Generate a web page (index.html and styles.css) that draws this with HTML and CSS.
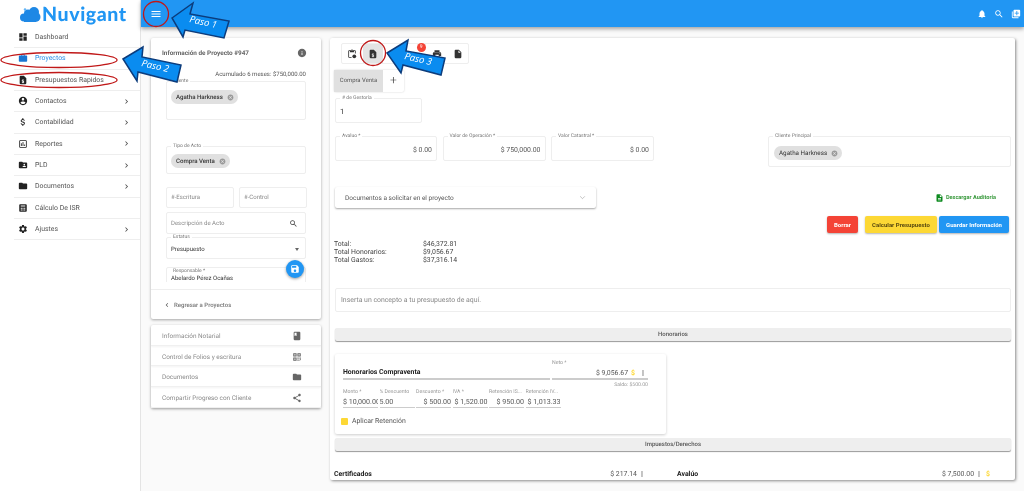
FILE: index.html
```html
<!DOCTYPE html>
<html lang="es">
<head>
    <meta charset="UTF-8">
    <title>Nuvigant</title>
    <link rel="stylesheet" href="styles.css">
</head>
<body>
    <svg class="defs" aria-hidden="true">
        <symbol id="i-dashboard" viewBox="0 0 24 24"><path d="M3 13h8V3H3v10zm0 8h8v-6H3v6zm10 0h8V11h-8v10zm0-18v6h8V3h-8z"/></symbol>
        <symbol id="i-work" viewBox="0 0 24 24"><path d="M20 6h-4V4c0-1.110-.89-2-2-2h-4c-1.110 0-2 .89-2 2v2H4c-1.110 0-1.990.89-1.990 2L2 19c0 1.110.89 2 2 2h16c1.110 0 2-.89 2-2V8c0-1.110-.89-2-2-2zm-6 0h-4V4h4v2z"/></symbol>
        <symbol id="i-budget" viewBox="0 0 24 24"><path fill-rule="evenodd" d="M14 2H6c-1.100 0-2 .9-2 2v16c0 1.100.9 2 2 2h12c1.100 0 2-.9 2-2V8l-6-6zm-1 8h-2v1.200c-1.100.3-2 1.100-2 2.300 0 1.400 1.100 2 2.600 2.400.9.2 1.200.5 1.200.9 0 .3-.3.7-1.100.7-.9 0-1.200-.4-1.200-.9H9c.1 1.300 1 2 2 2.300V20h2v-1.100c1.100-.2 2-1 2-2.200 0-1.700-1.400-2.200-2.700-2.600-1-.2-1.300-.5-1.300-.8 0-.4.4-.7 1-.7.7 0 1 .3 1 .8h1.900c-.1-1.100-.8-1.900-1.900-2.200V10z"/></symbol>
        <symbol id="i-account" viewBox="0 0 24 24"><path d="M12 2C6.480 2 2 6.480 2 12s4.480 10 10 10 10-4.480 10-10S17.520 2 12 2zm0 3c1.660 0 3 1.340 3 3s-1.340 3-3 3-3-1.340-3-3 1.340-3 3-3zm0 14.200c-2.500 0-4.710-1.280-6-3.220.03-1.990 4-3.080 6-3.080 1.990 0 5.970 1.090 6 3.080-1.290 1.940-3.500 3.220-6 3.220z"/></symbol>
        <symbol id="i-money" viewBox="0 0 24 24"><path d="M11.800 10.900c-2.270-.59-3-1.200-3-2.150 0-1.090 1.010-1.850 2.700-1.850 1.780 0 2.440.85 2.500 2.100h2.210c-.07-1.720-1.120-3.300-3.210-3.810V3h-3v2.160c-1.940.42-3.500 1.680-3.500 3.610 0 2.310 1.910 3.460 4.700 4.130 2.500.6 3 1.480 3 2.410 0 .69-.49 1.790-2.700 1.790-2.060 0-2.870-.92-2.980-2.100h-2.200c.12 2.190 1.760 3.420 3.680 3.830V21h3v-2.150c1.950-.37 3.500-1.500 3.500-3.550 0-2.840-2.430-3.810-4.700-4.400z"/></symbol>
        <symbol id="i-report" viewBox="0 0 24 24"><path d="M19 3H5c-1.100 0-2 .9-2 2v14c0 1.100.9 2 2 2h14c1.100 0 2-.9 2-2V5c0-1.100-.9-2-2-2zm0 16H5V5h14v14zM7 10h2v7H7zm4-3h2v10h-2zm4 6h2v4h-2z"/></symbol>
        <symbol id="i-shared" viewBox="0 0 24 24"><path d="M20 6h-8l-2-2H4c-1.100 0-1.990.9-1.990 2L2 18c0 1.100.9 2 2 2h16c1.100 0 2-.9 2-2V8c0-1.100-.9-2-2-2zm-5 3c1.100 0 2 .9 2 2s-.9 2-2 2-2-.9-2-2 .9-2 2-2zm4 8h-8v-1c0-1.330 2.670-2 4-2s4 .67 4 2v1z"/></symbol>
        <symbol id="i-folder" viewBox="0 0 24 24"><path d="M10 4H4c-1.100 0-1.990.9-1.990 2L2 18c0 1.100.9 2 2 2h16c1.100 0 2-.9 2-2V8c0-1.100-.9-2-2-2h-8l-2-2z"/></symbol>
        <symbol id="i-calc" viewBox="0 0 24 24"><path fill-rule="evenodd" d="M5 3h14c1.100 0 2 .9 2 2v14c0 1.100-.9 2-2 2H5c-1.100 0-2-.9-2-2V5c0-1.100.9-2 2-2zm1.500 3v2.500h11V6h-11zm0 5.500v2.500h3v-2.500h-3zm4 0v2.500h3v-2.500h-3zm4 0v2.500h3v-2.500h-3zm-8 4v2.500h3v-2.500h-3zm4 0v2.500h3v-2.500h-3zm4 0v2.500h3v-2.500h-3z"/></symbol>
        <symbol id="i-settings" viewBox="0 0 24 24"><path d="M19.140 12.940c.04-.3.06-.61.06-.94 0-.32-.02-.64-.07-.94l2.030-1.580c.18-.14.23-.41.12-.61l-1.920-3.320c-.12-.22-.37-.29-.59-.22l-2.390.96c-.5-.38-1.030-.7-1.620-.94l-.36-2.540c-.04-.24-.24-.41-.48-.41h-3.840c-.24 0-.43.17-.47.41l-.36 2.540c-.59.24-1.130.57-1.620.94l-2.390-.96c-.22-.08-.47 0-.59.22L2.740 8.870c-.12.21-.08.47.12.61l2.030 1.580c-.05.3-.09.63-.09.94s.02.64.07.94l-2.030 1.580c-.18.14-.23.41-.12.61l1.920 3.320c.12.22.37.29.59.22l2.390-.96c.5.38 1.030.7 1.620.94l.36 2.540c.05.24.24.41.48.41h3.840c.24 0 .44-.17.47-.41l.36-2.540c.59-.24 1.130-.56 1.620-.94l2.390.96c.22.08.47 0 .59-.22l1.920-3.320c.12-.22.07-.47-.12-.61l-2.010-1.580zM12 15.600c-1.980 0-3.600-1.620-3.600-3.600s1.620-3.600 3.600-3.600 3.600 1.620 3.600 3.600-1.620 3.600-3.600 3.600z"/></symbol>
        <symbol id="i-right" viewBox="0 0 24 24"><path d="M10 6L8.590 7.410 13.170 12l-4.580 4.590L10 18l6-6z"/></symbol>
        <symbol id="i-left" viewBox="0 0 24 24"><path d="M15.410 7.410L14 6l-6 6 6 6 1.410-1.410L10.830 12z"/></symbol>
        <symbol id="i-menu" viewBox="0 0 24 24"><path d="M3 18h18v-2H3v2zm0-5h18v-2H3v2zm0-7v2h18V6H3z"/></symbol>
        <symbol id="i-bell" viewBox="0 0 24 24"><path d="M12 22c1.100 0 2-.9 2-2h-4c0 1.100.89 2 2 2zm6-6v-5c0-3.070-1.640-5.640-4.500-6.320V4c0-.83-.67-1.500-1.500-1.500s-1.500.67-1.500 1.500v.68C7.630 5.360 6 7.920 6 11v5l-2 2v1h16v-1l-2-2z"/></symbol>
        <symbol id="i-search" viewBox="0 0 24 24"><path d="M15.500 14h-.79l-.28-.27C15.410 12.590 16 11.110 16 9.500 16 5.910 13.090 3 9.500 3S3 5.910 3 9.500 5.910 16 9.500 16c1.610 0 3.090-.59 4.230-1.570l.27.28v.79l5 4.990L20.490 19l-4.990-5zm-6 0C7.010 14 5 11.990 5 9.500S7.010 5 9.500 5 14 7.010 14 9.500 11.990 14 9.500 14z"/></symbol>
        <symbol id="i-library" viewBox="0 0 24 24"><path d="M4 6H2v14c0 1.100.9 2 2 2h14v-2H4V6zm16-4H8c-1.100 0-2 .9-2 2v12c0 1.100.9 2 2 2h12c1.100 0 2-.9 2-2V4c0-1.100-.9-2-2-2zm-1 9h-4v4h-2v-4H9V9h4V5h2v4h4v2z"/></symbol>
        <symbol id="i-info" viewBox="0 0 24 24"><path d="M12 2C6.480 2 2 6.480 2 12s4.480 10 10 10 10-4.480 10-10S17.520 2 12 2zm1 15h-2v-6h2v6zm0-8h-2V7h2v2z"/></symbol>
        <symbol id="i-cancel" viewBox="0 0 24 24"><path d="M12 2C6.470 2 2 6.470 2 12s4.470 10 10 10 10-4.470 10-10S17.530 2 12 2zm5 13.590L15.590 17 12 13.410 8.410 17 7 15.590 10.590 12 7 8.410 8.410 7 12 10.590 15.590 7 17 8.410 13.410 12 17 15.590z"/></symbol>
        <symbol id="i-save" viewBox="0 0 24 24"><path d="M17 3H5c-1.110 0-2 .9-2 2v14c0 1.100.89 2 2 2h14c1.100 0 2-.9 2-2V7l-4-4zm-5 16c-1.660 0-3-1.340-3-3s1.340-3 3-3 3 1.340 3 3-1.340 3-3 3zm3-10H5V5h10v4z"/></symbol>
        <symbol id="i-book" viewBox="0 0 24 24"><path d="M18 2H6c-1.100 0-2 .9-2 2v16c0 1.100.9 2 2 2h12c1.100 0 2-.9 2-2V4c0-1.100-.9-2-2-2zM6 4h5v8l-2.500-1.500L6 12V4z"/></symbol>
        <symbol id="i-folios" viewBox="0 0 24 24"><path fill-rule="evenodd" d="M3 3h8v8H3V3zm2.500 2.500v3h3v-3h-3zM13 3h8v8h-8V3zm2.500 2.500v3h3v-3h-3zM3 13h8v8H3v-8zm2.500 2.500v3h3v-3h-3zM13 13h3v3h-3v-3zm5 0h3v3h-3v-3zm-5 5h3v3h-3v-3zm5 .5l3-3v3l-3 3v-3z"/></symbol>
        <symbol id="i-share" viewBox="0 0 24 24"><path d="M18 16.080c-.76 0-1.440.3-1.960.77L8.910 12.700c.05-.23.09-.46.09-.7s-.04-.47-.09-.7l7.050-4.110c.54.5 1.250.81 2.040.81 1.660 0 3-1.340 3-3s-1.340-3-3-3-3 1.340-3 3c0 .24.04.47.09.7L8.040 9.810C7.500 9.310 6.790 9 6 9c-1.660 0-3 1.340-3 3s1.340 3 3 3c.79 0 1.500-.31 2.040-.81l7.120 4.160c-.05.21-.08.43-.08.65 0 1.610 1.310 2.920 2.920 2.920s2.920-1.310 2.920-2.920-1.310-2.920-2.920-2.920z"/></symbol>
        <symbol id="i-print" viewBox="0 0 24 24"><path d="M19 8H5c-1.660 0-3 1.340-3 3v6h4v4h12v-4h4v-6c0-1.660-1.340-3-3-3zm-3 11H8v-5h8v5zm3-7c-.55 0-1-.45-1-1s.45-1 1-1 1 .45 1 1-.45 1-1 1zm-1-9H6v4h12V3z"/></symbol>
        <symbol id="i-file" viewBox="0 0 24 24"><path d="M6 2c-1.100 0-1.990.9-1.990 2L4 20c0 1.100.89 2 1.990 2H18c1.100 0 2-.9 2-2V8l-6-6H6zm7 7V3.500L18.500 9H13z"/></symbol>
        <symbol id="i-sheet" viewBox="0 0 24 24"><path d="M14 2H6c-1.100 0-1.990.9-1.990 2L4 20c0 1.100.89 2 1.990 2H18c1.100 0 2-.9 2-2V8l-6-6zm2 16H8v-2h8v2zm0-4H8v-2h8v2zm-3-5V3.500L18.500 9H13z"/></symbol>
        <symbol id="i-clip" viewBox="0 0 24 24"><path d="M19 3h-4.180C14.400 1.840 13.300 1 12 1s-2.400.84-2.820 2H5c-1.100 0-2 .9-2 2v14c0 1.100.9 2 2 2h6v-2H5V5h2v3h10V5h2v6h2V5c0-1.100-.9-2-2-2zm-7 2c-.55 0-1-.45-1-1s.45-1 1-1 1 .45 1 1-.45 1-1 1z"/><circle cx="17.500" cy="17.500" r="4.500"/></symbol>
        <symbol id="i-more" viewBox="0 0 24 24"><path d="M12 8c1.100 0 2-.9 2-2s-.9-2-2-2-2 .9-2 2 .9 2 2 2zm0 2c-1.100 0-2 .9-2 2s.9 2 2 2 2-.9 2-2-.9-2-2-2zm0 6c-1.100 0-2 .9-2 2s.9 2 2 2 2-.9 2-2-.9-2-2-2z"/></symbol>
        <symbol id="i-down" viewBox="0 0 24 24"><path d="M4 8l8 8 8-8" fill="none" stroke="currentColor" stroke-width="1.500"/></symbol>
    </svg>

    <div class="app">
        <aside class="sidebar">
            <div class="logo">
                <svg class="logo-cloud" viewBox="0 0 42 32">
                    <circle cx="8" cy="21" r="8"/>
                    <circle cx="16" cy="13" r="8"/>
                    <circle cx="28" cy="10" r="10"/>
                    <circle cx="31" cy="20" r="10"/>
                    <rect x="8" y="18" width="24" height="12"/>
                    <circle class="logo-spot" cx="10" cy="5" r="2.500"/>
                </svg>
                <span>Nuvigant</span>
            </div>
            <nav class="nav">
                <a class="nav-item"><svg class="ico"><use href="#i-dashboard"/></svg>Dashboard</a>
                <a class="nav-item nav-active"><svg class="ico"><use href="#i-work"/></svg>Proyectos</a>
                <a class="nav-item"><svg class="ico"><use href="#i-budget"/></svg>Presupuestos Rapidos</a>
                <a class="nav-item"><svg class="ico"><use href="#i-account"/></svg>Contactos<svg class="chev"><use href="#i-right"/></svg></a>
                <a class="nav-item"><svg class="ico"><use href="#i-money"/></svg>Contabilidad<svg class="chev"><use href="#i-right"/></svg></a>
                <a class="nav-item"><svg class="ico"><use href="#i-report"/></svg>Reportes<svg class="chev"><use href="#i-right"/></svg></a>
                <a class="nav-item"><svg class="ico"><use href="#i-shared"/></svg>PLD<svg class="chev"><use href="#i-right"/></svg></a>
                <a class="nav-item"><svg class="ico"><use href="#i-folder"/></svg>Documentos<svg class="chev"><use href="#i-right"/></svg></a>
                <a class="nav-item"><svg class="ico"><use href="#i-calc"/></svg>Cálculo De ISR</a>
                <a class="nav-item"><svg class="ico"><use href="#i-settings"/></svg>Ajustes<svg class="chev"><use href="#i-right"/></svg></a>
            </nav>
        </aside>

        <div class="page">
            <header class="topbar">
                <svg class="top-menu"><use href="#i-menu"/></svg>
                <div class="top-actions">
                    <svg><use href="#i-bell"/></svg>
                    <svg><use href="#i-search"/></svg>
                    <svg><use href="#i-library"/></svg>
                </div>
            </header>

            <div class="content">
                <div class="left-col">
                    <section class="card project">
                        <div class="project-head">
                            <h2>Información de Proyecto #947</h2>
                            <svg class="ico-gray"><use href="#i-info"/></svg>
                        </div>
                        <p class="accum">Acumulado 6 meses: $750,000.00</p>
                        <div class="field field-client">
                            <label>Cliente</label>
                            <span class="chip chip-bold">Agatha Harkness<svg><use href="#i-cancel"/></svg></span>
                        </div>
                        <div class="field field-act">
                            <label>Tipo de Acto</label>
                            <span class="chip chip-bold">Compra Venta<svg><use href="#i-cancel"/></svg></span>
                        </div>
                        <div class="field-pair">
                            <div class="field field-input"><span class="placeholder">#-Escritura</span></div>
                            <div class="field field-input"><span class="placeholder">#-Control</span></div>
                        </div>
                        <div class="field field-input field-desc">
                            <span class="placeholder">Descripción de Acto</span>
                            <svg class="field-icon"><use href="#i-search"/></svg>
                        </div>
                        <div class="field field-input field-status">
                            <label>Estatus</label>
                            <span>Presupuesto</span>
                            <i class="caret"></i>
                        </div>
                        <div class="resp-clip">
                            <div class="field field-resp">
                                <label>Responsable *</label>
                                <span>Abelardo Pérez Ocañas</span>
                            </div>
                        </div>
                        <button class="fab"><svg><use href="#i-save"/></svg></button>
                        <div class="back-link"><svg><use href="#i-left"/></svg>Regresar a Proyectos</div>
                    </section>

                    <section class="card side-links">
                        <div class="side-link">Información Notarial<svg><use href="#i-book"/></svg></div>
                        <div class="side-link">Control de Folios y escritura<svg><use href="#i-folios"/></svg></div>
                        <div class="side-link">Documentos<svg><use href="#i-folder"/></svg></div>
                        <div class="side-link">Compartir Progreso con Cliente<svg><use href="#i-share"/></svg></div>
                    </section>
                </div>

                <main class="card budget">
                    <div class="toolbar">
                        <span class="tool"><svg><use href="#i-clip"/></svg></span>
                        <span class="tool tool-on"><svg><use href="#i-budget"/></svg></span>
                        <span class="tool tool-wide"><i class="badge">9</i></span>
                        <span class="tool"><svg><use href="#i-print"/></svg></span>
                        <span class="tool"><svg><use href="#i-file"/></svg></span>
                    </div>
                    <div class="tabs">
                        <span class="tab">Compra Venta</span>
                        <span class="tab-add">+</span>
                    </div>
                    <div class="field val gestoria">
                        <label># de Gestoría</label>
                        <span>1</span>
                    </div>
                    <div class="amounts">
                        <div class="field val val-right w-a"><label>Avaluo *</label><span>$ 0.00</span></div>
                        <div class="field val val-right w-b"><label>Valor de Operación *</label><span>$ 750,000.00</span></div>
                        <div class="field val val-right w-b"><label>Valor Catastral *</label><span>$ 0.00</span></div>
                        <div class="field principal">
                            <label>Cliente Principal</label>
                            <span class="chip">Agatha Harkness<svg><use href="#i-cancel"/></svg></span>
                        </div>
                    </div>
                    <div class="docs-row">
                        <div class="accordion">Documentos a solicitar en el proyecto<svg><use href="#i-down"/></svg></div>
                        <a class="audit"><svg><use href="#i-sheet"/></svg>Descargar Auditoría</a>
                    </div>
                    <div class="actions">
                        <button class="btn btn-red">Borrar</button>
                        <button class="btn btn-yellow">Calcular Presupuesto</button>
                        <button class="btn btn-blue">Guardar Información</button>
                    </div>
                    <dl class="totals">
                        <dt>Total:</dt><dd>$46,372.81</dd>
                        <dt>Total Honorarios:</dt><dd>$9,056.67</dd>
                        <dt>Total Gastos:</dt><dd>$37,316.14</dd>
                    </dl>
                    <div class="concept">Inserta un concepto a tu presupuesto de aquí.</div>
                    <div class="band band-first">Honorarios</div>
                    <div class="fee-card">
                        <div class="fee-top">
                            <div class="fee-title">Honorarios Compraventa</div>
                            <div class="fee-net">
                                <label>Neto *</label>
                                <div class="fee-net-val">$ 9,056.67<b class="coin">$</b><svg><use href="#i-more"/></svg></div>
                                <small>Saldo: $500.00</small>
                            </div>
                        </div>
                        <div class="fee-cols">
                            <div class="fee-col"><label>Monto *</label><span>$ 10,000.00</span></div>
                            <div class="fee-col"><label>% Descuento</label><span>5.00</span></div>
                            <div class="fee-col num"><label>Descuento *</label><span>$ 500.00</span></div>
                            <div class="fee-col num"><label>IVA *</label><span>$ 1,520.00</span></div>
                            <div class="fee-col num"><label>Retención IS...</label><span>$ 950.00</span></div>
                            <div class="fee-col num"><label>Retención IV...</label><span>$ 1,013.33</span></div>
                        </div>
                        <div class="fee-check"><i class="check"></i>Aplicar Retención</div>
                    </div>
                    <div class="band">Impuestos/Derechos</div>
                    <div class="cost-rows">
                        <div class="cost"><b>Certificados</b><span>$ 217.14</span><svg><use href="#i-more"/></svg></div>
                        <div class="cost cost-second"><b>Avalúo</b><span>$ 7,500.00</span><svg><use href="#i-more"/></svg><b class="coin">$</b></div>
                    </div>
                </main>
            </div>
        </div>

        <svg class="notes" viewBox="0 0 1024 491">
            <g class="arrow">
                <polygon points="172,18 193,3 190,14 229,21 224,38 185,30 183,37"/>
                <polygon points="123,59 143,47 142,57 181,65 177,82 138,72 137,81"/>
                <polygon points="387,53 408,40 406,51 445,58 441,75 403,65 401,73"/>
            </g>
            <g class="paso">
                <text transform="translate(189 22) rotate(13)">Paso 1</text>
                <text transform="translate(141 66) rotate(13)">Paso 2</text>
                <text transform="translate(404 59) rotate(13)">Paso 3</text>
            </g>
            <g class="marks">
                <ellipse cx="156" cy="14" rx="12.500" ry="12.500"/>
                <ellipse cx="59" cy="60" rx="58" ry="7.500"/>
                <ellipse cx="59" cy="80" rx="58" ry="7.500"/>
                <ellipse cx="373" cy="53" rx="12.500" ry="12.500"/>
            </g>
        </svg>
    </div>
</body>
</html>
```

FILE: styles.css
```css
* {
    box-sizing: border-box;
}

body {
    margin: 0;
    font-family: Roboto, 'Liberation Sans', Arial, sans-serif;
    font-size: 6.9px;
    color: #444;
    background: #fff;
    text-rendering: geometricPrecision;
}

svg {
    display: block;
    fill: currentColor;
}

.defs {
    position: absolute;
    width: 0;
    height: 0;
}

.app {
    position: relative;
    display: grid;
    grid-template-columns: 141px 1fr;
    width: 1024px;
    height: 491px;
    overflow: hidden;
    filter: blur(0.4px);
}

/* sidebar */
.sidebar {
    background: #fff;
    border-right: 1px solid #e4e4e4;
}

.logo {
    display: flex;
    align-items: center;
    height: 27px;
    padding: 2px 0 0 20px;
    color: #2196f3;
    font-family: Lato, Roboto, sans-serif;
    font-size: 19.5px;
    font-weight: 900;
    letter-spacing: 0.6px;
}

.logo-cloud {
    width: 21px;
    height: 16px;
    margin-right: 1px;
    fill: #1e88e5;
}

.logo-spot {
    fill: #64b5f6;
}

.nav-item {
    display: flex;
    align-items: center;
    height: 21.33px;
    margin-left: 14px;
    padding-left: 4px;
    border-bottom: 1px solid #eee;
    color: #555;
}

.nav-active {
    color: #2a8fe8;
}

.ico {
    width: 10px;
    height: 10px;
    margin-right: 7px;
    color: #222;
}

.nav-active .ico {
    color: #1976d2;
}

.chev {
    width: 9px;
    height: 9px;
    margin-left: auto;
    margin-right: 9px;
    color: #444;
}

/* top */
.page {
    background: #fafafa;
    min-width: 0;
}

.topbar {
    display: flex;
    align-items: center;
    justify-content: space-between;
    height: 27px;
    padding: 0 3px 0 9px;
    background: #2196f3;
    color: #fff;
    box-shadow: 0 2px 4px rgba(0, 0, 0, 0.35);
}

.top-menu {
    width: 12px;
    height: 12px;
}

.top-actions {
    display: flex;
    gap: 7px;
}

.top-actions svg {
    width: 10px;
    height: 10px;
}

.content {
    display: grid;
    grid-template-columns: 170px 685px;
    gap: 9px;
    padding: 11px 0 0 10px;
}

.card {
    position: relative;
    background: #fff;
    border-radius: 2px;
    box-shadow: 0 1px 3px rgba(0, 0, 0, 0.35);
}

/* left column */
.project {
    height: 281px;
    padding: 0 15px;
}

.project-head {
    display: flex;
    align-items: center;
    justify-content: space-between;
    height: 28px;
    margin: 0 -4px;
    padding-right: 3px;
    padding-top: 1px;
}

.project-head h2 {
    margin: 0;
    font-size: 6.4px;
    font-weight: 700;
    color: #666;
}

.ico-gray {
    width: 10px;
    height: 10px;
    color: #666;
}

.accum {
    margin: 4px 0 0;
    height: 11px;
    text-align: right;
    font-size: 6px;
    line-height: 9px;
    color: #555;
}

.field {
    position: relative;
    border: 1px solid #eee;
    border-radius: 2px;
    background: #fff;
}

.field label {
    position: absolute;
    top: -4px;
    left: 4px;
    padding: 0 2px;
    background: #fff;
    font-size: 5px;
    line-height: 6px;
    color: #777;
}

.field-client {
    height: 39px;
    padding: 8px 4px 0;
}

.field-act {
    height: 28px;
    margin-top: 26px;
    padding: 7px 4px 0;
}

.chip {
    display: inline-flex;
    align-items: center;
    gap: 4px;
    height: 14px;
    padding: 0 4px 0 5px;
    border-radius: 7px;
    background: #e0e0e0;
    font-size: 6.3px;
    color: #333;
}

.chip-bold {
    font-weight: 500;
    font-size: 6.1px;
}

.chip svg {
    width: 7px;
    height: 7px;
    color: #999;
}

.field-pair {
    display: grid;
    grid-template-columns: 68px 68px;
    gap: 5px;
    margin-top: 13px;
}

.field-input {
    display: flex;
    align-items: center;
    height: 21px;
    padding: 0 4px;
    font-size: 6px;
}

.placeholder {
    color: #888;
}

.field-desc {
    justify-content: space-between;
    margin-top: 4px;
    height: 22px;
}

.field-icon {
    width: 9px;
    height: 9px;
    margin-right: 3px;
    color: #444;
}

.field-status {
    height: 22px;
    margin-top: 3px;
    padding-top: 3px;
    color: #333;
}

.caret {
    margin-left: auto;
    margin-right: 2px;
    border: 2.5px solid transparent;
    border-top: 3px solid #666;
    border-bottom: 0;
}

.resp-clip {
    height: 15px;
    margin-top: 8px;
    overflow: hidden;
}

.field-resp {
    height: 24px;
    padding: 7px 4px 0;
    font-size: 6px;
    color: #333;
}

.field-resp label {
    top: 0;
}

.fab {
    position: absolute;
    top: 222px;
    left: 135px;
    width: 18px;
    height: 18px;
    padding: 4px;
    border: 0;
    border-radius: 50%;
    background: #2196f3;
    color: #fff;
    box-shadow: 0 1px 3px rgba(0, 0, 0, 0.4);
}

.fab svg {
    width: 10px;
    height: 10px;
}

.back-link {
    display: flex;
    align-items: center;
    gap: 3px;
    height: 31px;
    margin: 7px -15px 0;
    padding-left: 12px;
    border-top: 1px solid #eee;
    color: #777;
    font-size: 6px;
    font-weight: 500;
}

.back-link svg {
    width: 8px;
    height: 8px;
    color: #555;
}

.side-links {
    margin-top: 6px;
}

.side-link {
    display: flex;
    align-items: center;
    justify-content: space-between;
    height: 20.7px;
    padding: 2px 20px 0 11px;
    border-bottom: 1px solid #f0f0f0;
    box-shadow: 0 1px 2px rgba(0, 0, 0, 0.05);
    font-size: 6.4px;
    color: #8a8a8a;
}

.side-link svg {
    width: 10px;
    height: 10px;
    margin-right: -1px;
    color: #666;
}

/* budget panel */
.budget {
    height: 442px;
    padding: 5px 4px 0 5px;
    overflow: hidden;
    box-shadow: 1px 1px 3px rgba(0, 0, 0, 0.45);
}

.toolbar {
    display: flex;
    width: 128px;
    height: 21px;
    margin-left: 6px;
    border: 1px solid #eee;
    border-radius: 2px;
}

.tool {
    display: flex;
    align-items: center;
    justify-content: center;
    width: 21px;
    color: #333;
}

.tool svg {
    width: 10px;
    height: 10px;
}

.tool-on {
    background: #e3e3e3;
}

.tool-wide {
    position: relative;
    width: 44px;
}

.badge {
    position: absolute;
    top: -1px;
    right: 1px;
    width: 9px;
    height: 9px;
    border-radius: 50%;
    background: #f44336;
    color: #fff;
    font-size: 5px;
    font-style: normal;
    line-height: 9px;
    text-align: center;
}

.tabs {
    display: flex;
    width: 70px;
    height: 22px;
    margin: 6px 0 0 -1px;
    border-radius: 2px;
    box-shadow: 0 0 2px rgba(0, 0, 0, 0.2);
}

.tab {
    display: flex;
    align-items: center;
    justify-content: center;
    width: 49px;
    background: #e0e0e0;
    font-size: 5.9px;
    color: #555;
}

.tab-add {
    flex: 1;
    text-align: center;
    font-size: 12px;
    line-height: 21px;
    font-weight: 300;
    color: #333;
}

.val {
    display: flex;
    align-items: center;
    height: 25px;
    padding: 2px 4px 0;
    font-size: 6.9px;
    color: #555;
}

.val-right {
    justify-content: flex-end;
}

.gestoria {
    width: 87px;
    margin-top: 6px;
    font-size: 7.5px;
    color: #333;
}

.amounts {
    display: flex;
    align-items: flex-start;
    gap: 5.5px;
    height: 31px;
    margin-top: 13px;
}

.w-a {
    width: 102px;
}

.w-b {
    width: 103px;
}

.principal {
    width: 243px;
    height: 31px;
    margin-left: auto;
    padding: 9px 5px 0;
}

.docs-row {
    display: flex;
    align-items: center;
    justify-content: space-between;
    height: 21px;
    margin-top: 20px;
    padding-right: 15px;
}

.accordion {
    display: flex;
    align-items: center;
    justify-content: space-between;
    width: 261px;
    height: 21px;
    padding: 0 10px;
    border-radius: 2px;
    box-shadow: 0 1px 2px rgba(0, 0, 0, 0.35);
    font-size: 6.5px;
    color: #555;
}

.accordion svg {
    width: 7px;
    height: 7px;
    color: #777;
}

.audit {
    display: flex;
    align-items: center;
    gap: 2px;
    color: #3a9a3e;
    font-size: 5.6px;
    font-weight: 700;
}

.audit svg {
    width: 9px;
    height: 10px;
    color: #0d8a1f;
}

.actions {
    display: flex;
    justify-content: flex-end;
    height: 17px;
    margin-top: 8px;
    padding-right: 2px;
}

.btn {
    height: 17px;
    padding: 0;
    border: 0;
    border-radius: 2px;
    font-family: inherit;
    font-size: 6px;
    font-weight: 700;
    box-shadow: 0 1px 2px rgba(0, 0, 0, 0.3);
}

.btn-red {
    width: 31px;
    margin-right: 7px;
    background: #f44336;
    color: #fff;
}

.btn-yellow {
    width: 72px;
    margin-right: 2px;
    background: #fdd835;
    color: #5a4a10;
}

.btn-blue {
    width: 70px;
    background: #2196f3;
    color: #fff;
}

.totals {
    display: grid;
    grid-template-columns: 89px auto;
    margin: 7px 0 0 -1px;
    line-height: 8.2px;
    color: #444;
}

.totals dt,
.totals dd {
    margin: 0;
}

.concept {
    display: flex;
    align-items: center;
    height: 24px;
    margin-top: 23.5px;
    padding: 0 5px;
    border: 1px solid #eee;
    border-radius: 2px;
    color: #888;
}

.band {
    height: 13px;
    margin-top: 4px;
    border-radius: 2px;
    background: #eee;
    box-shadow: 0 1px 1px rgba(0, 0, 0, 0.4);
    font-size: 6px;
    font-weight: 500;
    line-height: 14px;
    text-align: center;
    color: #555;
}

.band-first {
    margin-top: 16px;
}

.fee-card {
    width: 331px;
    height: 80px;
    margin-top: 13px;
    padding: 5px 8px 0;
    border-radius: 2px;
    box-shadow: 0 1px 3px rgba(0, 0, 0, 0.2);
}

.fee-top {
    display: flex;
    gap: 2px;
    height: 27px;
}

.fee-title {
    width: 207px;
    height: 21px;
    padding-top: 9px;
    border-bottom: 2px solid #ccc;
    font-weight: 700;
    color: #222;
}

.fee-net {
    position: relative;
    width: 96px;
    height: 21px;
    border-bottom: 2px solid #ccc;
}

.fee-net label {
    display: block;
    font-size: 5.2px;
    line-height: 6px;
    color: #999;
    padding-top: 1px;
}

.fee-net-val {
    display: flex;
    align-items: center;
    justify-content: flex-end;
    height: 11px;
    margin-top: 1px;
    color: #555;
}

.fee-net-val svg {
    width: 8px;
    height: 8px;
    margin: 0 1px 0 4px;
    color: #555;
}

.coin {
    margin-left: 3px;
    color: #fdd835;
    font-weight: 700;
}

.fee-net small {
    display: block;
    margin-top: 4px;
    text-align: right;
    font-size: 5.1px;
    color: #999;
}

.fee-cols {
    display: grid;
    grid-template-columns: repeat(6, 35px);
    gap: 1.5px;
    margin-top: 2px;
}

.fee-col {
    height: 20px;
    overflow: hidden;
    border-bottom: 1px solid #ccc;
    white-space: nowrap;
}

.fee-col label {
    display: block;
    font-size: 5.2px;
    line-height: 8px;
    color: #999;
}

.fee-col span {
    display: block;
    margin-top: 1px;
    font-size: 7.1px;
    line-height: 10px;
    color: #555;
}

.num span {
    text-align: right;
}

.fee-check {
    display: flex;
    align-items: center;
    gap: 4px;
    margin: 9px 0 0 -2px;
    color: #555;
}

.check {
    width: 7px;
    height: 7px;
    border-radius: 1px;
    background: #fdd835;
}

.cost-rows {
    display: grid;
    grid-template-columns: 343px 1fr;
    margin: 19px 0 0 -1px;
}

.cost {
    display: flex;
    align-items: center;
    color: #555;
}

.cost b:first-child {
    margin-right: auto;
    color: #222;
}

.cost svg {
    width: 8px;
    height: 8px;
    margin-right: 31px;
    margin-left: 1px;
}

.cost-second svg {
    margin-right: 0;
}

.cost-second {
    padding-right: 21px;
}

/* annotations drawn on top of the screenshot */
.notes {
    position: absolute;
    top: 0;
    left: 0;
    width: 1024px;
    height: 491px;
    pointer-events: none;
}

.arrow polygon {
    fill: #0a8cf0;
    stroke: #0c3c7c;
    stroke-width: 1.5;
}

.paso text {
    fill: #fff;
    font-family: 'Open Sans', sans-serif;
    font-size: 9.5px;
    font-style: italic;
}

.marks ellipse {
    fill: none;
    stroke: #c01818;
    stroke-width: 1.3;
}
```
